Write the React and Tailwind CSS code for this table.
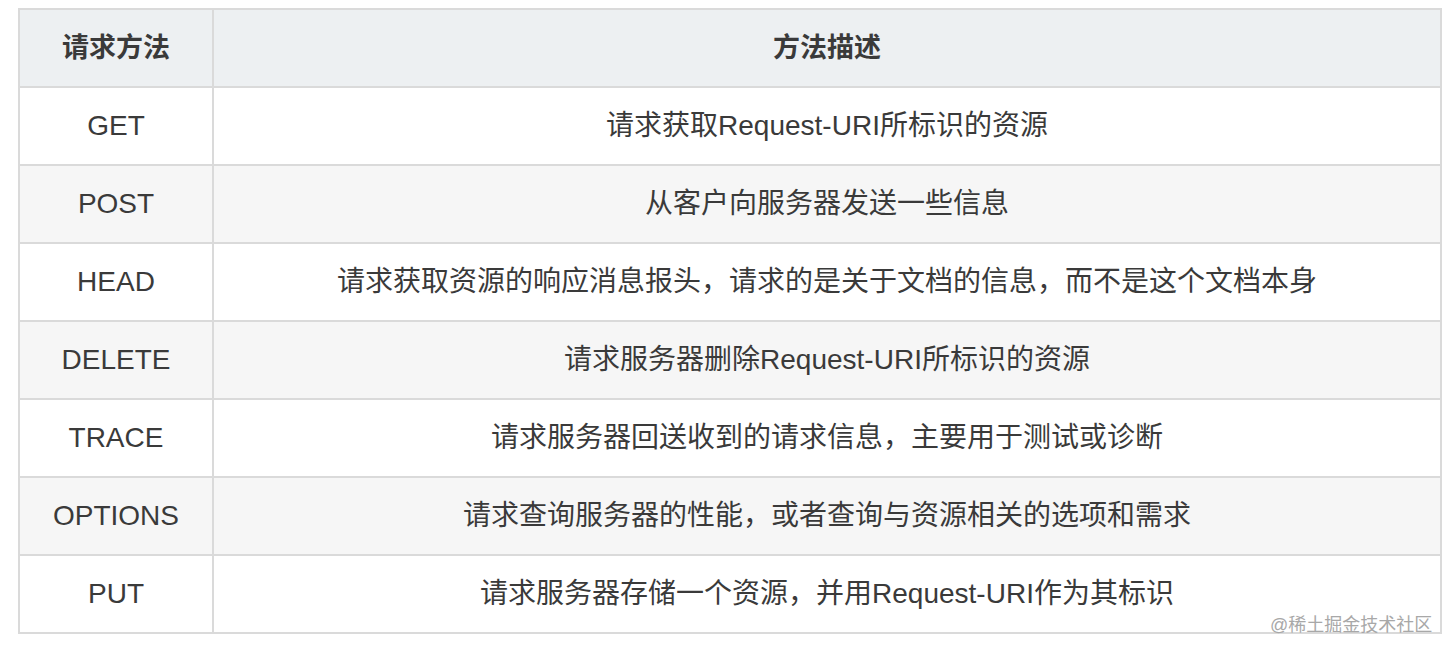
const rows = [
  { method: "GET", desc: "请求获取Request-URI所标识的资源" },
  { method: "POST", desc: "从客户向服务器发送一些信息" },
  { method: "HEAD", desc: "请求获取资源的响应消息报头，请求的是关于文档的信息，而不是这个文档本身" },
  { method: "DELETE", desc: "请求服务器删除Request-URI所标识的资源" },
  { method: "TRACE", desc: "请求服务器回送收到的请求信息，主要用于测试或诊断" },
  { method: "OPTIONS", desc: "请求查询服务器的性能，或者查询与资源相关的选项和需求" },
  { method: "PUT", desc: "请求服务器存储一个资源，并用Request-URI作为其标识" },
];

export default function App() {
  return (
    <div
      className="relative h-[656px] w-[1450px] bg-white pl-[18px] pt-[8px] text-[#3a3a3a]"
      style={{ fontFamily: '"Liberation Sans", "Noto Sans CJK SC", sans-serif' }}
    >
      <div className="w-[1424px] border-2 border-[#dadada]">
        <div className="flex h-[76px] bg-[#edf0f2] text-[27px] font-bold">
          <div className="flex w-[194px] items-center justify-center border-r-2 border-[#dadada]">请求方法</div>
          <div className="flex flex-1 items-center justify-center">方法描述</div>
        </div>
        {rows.map((row, i) => (
          <div
            key={row.method}
            className={`flex h-[78px] border-t-2 border-[#dadada] text-[28px] ${i % 2 === 1 ? "bg-[#f6f6f6]" : "bg-white"}`}
          >
            <div className="flex w-[194px] items-center justify-center border-r-2 border-[#dadada]">{row.method}</div>
            <div className="flex flex-1 items-center justify-center">{row.desc}</div>
          </div>
        ))}
      </div>
      <div className="absolute left-[1270px] top-[614px] text-[18px] leading-[22px] text-[#a8a8a8]">@稀土掘金技术社区</div>
    </div>
  );
}
